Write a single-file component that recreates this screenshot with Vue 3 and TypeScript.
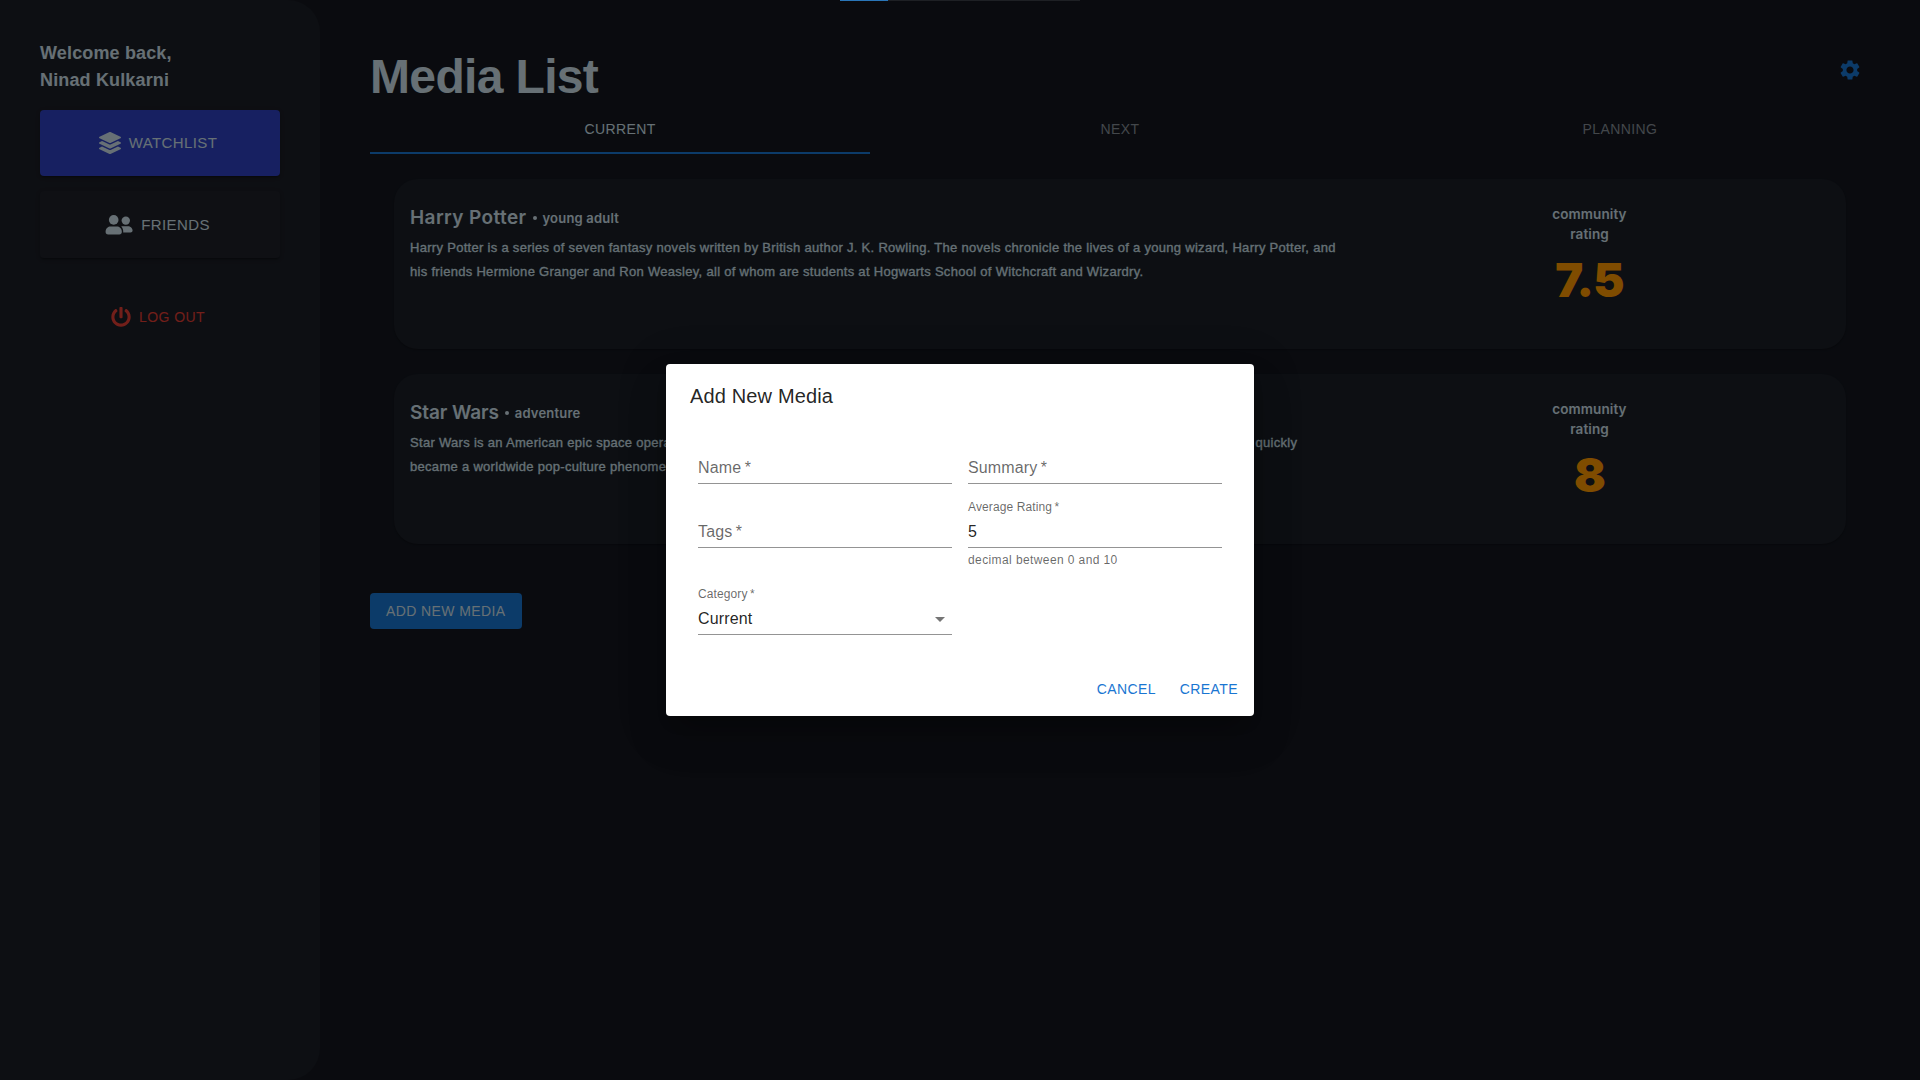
<script setup lang="ts">
interface Media {
  name: string
  tag: string
  summary: string[]
  rating: string
}

const tabs: string[] = ['Current', 'Next', 'Planning']

const mediaList: Media[] = [
  {
    name: 'Harry Potter',
    tag: 'young adult',
    summary: [
      'Harry Potter is a series of seven fantasy novels written by British author J. K. Rowling. The novels chronicle the lives of a young wizard, Harry Potter, and',
      'his friends Hermione Granger and Ron Weasley, all of whom are students at Hogwarts School of Witchcraft and Wizardry.',
    ],
    rating: '7.5',
  },
  {
    name: 'Star Wars',
    tag: 'adventure',
    summary: [
      'Star Wars is an American epic space opera multimedia franchise created by George Lucas, which began with the eponymous 1977 film and quickly',
      'became a worldwide pop-culture phenomenon.',
    ],
    rating: '8',
  },
]
</script>

<template>
  <div class="app">
    <aside class="sidebar">
      <p class="welcome">Welcome back,<br />Ninad Kulkarni</p>
      <button class="nav-btn primary">
        <svg width="22" height="22" viewBox="0 0 512 512" fill="currentColor">
          <path d="M12.41 148.02l232.94 105.67c6.8 3.09 14.49 3.09 21.29 0l232.94-105.67c16.55-7.51 16.55-32.52 0-40.03L266.65 2.31a25.607 25.607 0 0 0-21.29 0L12.41 107.98c-16.55 7.51-16.55 32.53 0 40.04zm487.18 88.28l-58.09-26.33-161.64 73.27c-7.56 3.43-15.59 5.17-23.86 5.17s-16.29-1.74-23.86-5.17L70.51 209.97l-58.1 26.33c-16.55 7.5-16.55 32.5 0 40l232.94 105.59c6.8 3.08 14.49 3.08 21.29 0L499.59 276.3c16.55-7.5 16.55-32.5 0-40zm0 127.8l-57.87-26.23-161.86 73.37c-7.56 3.43-15.59 5.17-23.86 5.17s-16.29-1.74-23.86-5.17L70.29 337.87 12.41 364.1c-16.55 7.5-16.55 32.5 0 40l232.94 105.59c6.8 3.08 14.49 3.08 21.29 0L499.59 404.1c16.55-7.5 16.55-32.5 0-40z" />
        </svg>
        <span>Watchlist</span>
      </button>
      <button class="nav-btn friends">
        <svg width="28" height="20" viewBox="0 0 28 20" fill="currentColor">
          <circle cx="8.7" cy="4.9" r="4.8" />
          <circle cx="20.8" cy="5.6" r="4.2" />
          <path d="M.6 17v-.6c0-3 2.4-5 5-5h6.200c2.600 0 5 2 5 5v.6c0 1.300-.9 2.500-2.500 2.500H3.100C1.500 19.500.6 18.300.6 17z" />
          <path d="M16.200 11.600c.5-.2 1.100-.4 1.800-.4h4.800c2.700 0 4.800 2 4.800 4.400 0 1.200-.9 2-2.100 2h-7.300c.2-2.300-.3-4.400-2-6z" />
        </svg>
        <span>Friends</span>
      </button>
      <button class="logout">
        <svg width="20" height="20" viewBox="0 0 512 512" fill="currentColor">
          <path d="M400 54.1c63 45 104 118.600 104 201.900 0 136.800-110.800 247.700-247.500 248C120 504.300 8.200 393 8 256.400 7.900 173.100 48.900 99.300 111.800 54.200c11.700-8.300 28-4.800 35 7.700L162.600 90c5.900 10.500 3.100 23.800-6.600 31-41.500 30.800-68 79.600-68 134.900-.1 92.300 74.500 168.100 168 168.100 91.600 0 168.600-74.200 168-169.100-.3-51.800-24.700-101.800-68.100-134-9.700-7.200-12.400-20.500-6.500-30.900l15.800-28.100c7-12.400 23.200-16.100 34.800-7.800zM296 264V24c0-13.300-10.700-24-24-24h-32c-13.300 0-24 10.700-24 24v240c0 13.300 10.700 24 24 24h32c13.300 0 24-10.700 24-24z" />
        </svg>
        <span>Log out</span>
      </button>
    </aside>

    <main class="main">
      <header class="header">
        <h1>Media List</h1>
        <svg class="settings" width="24" height="24" viewBox="0 0 24 24" fill="currentColor">
          <path d="M19.140 12.940c.04-.3.06-.61.06-.94 0-.32-.02-.64-.07-.94l2.030-1.580c.18-.14.23-.41.12-.61l-1.920-3.320c-.12-.22-.37-.29-.59-.22l-2.390.96c-.5-.38-1.030-.7-1.620-.94l-.36-2.540c-.04-.24-.24-.41-.48-.41h-3.840c-.24 0-.43.17-.47.41l-.36 2.540c-.59.24-1.130.57-1.620.94l-2.390-.96c-.22-.08-.47 0-.59.22L2.740 8.870c-.12.21-.08.47.12.61l2.030 1.580c-.05.3-.09.63-.09.94s.02.64.07.94l-2.030 1.580c-.18.14-.23.41-.12.61l1.920 3.320c.12.22.37.29.59.22l2.390-.96c.5.38 1.030.7 1.620.94l.36 2.540c.05.24.24.41.48.41h3.840c.24 0 .44-.17.47-.41l.36-2.540c.59-.24 1.130-.56 1.620-.94l2.390.96c.22.08.47 0 .59-.22l1.920-3.320c.12-.22.07-.47-.12-.61l-2.010-1.580zM12 15.600c-1.980 0-3.600-1.620-3.600-3.600s1.620-3.600 3.600-3.600 3.600 1.620 3.600 3.600-1.620 3.600-3.600 3.600z" />
        </svg>
      </header>

      <nav class="tabs">
        <div v-for="(tab, i) in tabs" :key="tab" class="tab" :class="{ active: i === 0 }">{{ tab }}</div>
      </nav>

      <section class="cards">
        <article v-for="media in mediaList" :key="media.name" class="card">
          <div class="info">
            <div class="title-row">
              <span class="name">{{ media.name }}</span>
              <span class="dot"></span>
              <span class="tag">{{ media.tag }}</span>
            </div>
            <p v-for="line in media.summary" :key="line" class="summary">{{ line }}</p>
          </div>
          <div class="rating">
            <div class="rating-label">community<br />rating</div>
            <div class="score">{{ media.rating }}</div>
          </div>
        </article>
      </section>

      <button class="add">Add new media</button>
    </main>

    <div class="backdrop">
      <div class="dialog">
        <h2>Add New Media</h2>
        <div class="form">
          <div class="field"><div class="control empty">Name&thinsp;*</div></div>
          <div class="field"><div class="control empty">Summary&thinsp;*</div></div>
          <div class="field"><div class="control empty">Tags&thinsp;*</div></div>
          <div class="field">
            <label>Average Rating&thinsp;*</label>
            <div class="control">5</div>
            <div class="helper">decimal between 0 and 10</div>
          </div>
          <div class="field">
            <label>Category&thinsp;*</label>
            <div class="control">
              Current
              <svg width="24" height="24" viewBox="0 0 24 24"><path d="M7 10l5 5 5-5z" fill="#757575" /></svg>
            </div>
          </div>
        </div>
        <div class="actions">
          <button>Cancel</button>
          <button>Create</button>
        </div>
      </div>
    </div>

    <div class="progress"><div class="progress-value"></div></div>
  </div>
</template>

<style>
body {
  margin: 0;
  background: #14171f;
}
</style>

<style scoped>
* {
  box-sizing: border-box;
}

.app {
  position: relative;
  display: flex;
  width: 1920px;
  height: 1080px;
  overflow: hidden;
  background: #14171f;
  color: #cee0ea;
  font-family: "Liberation Sans", Arial, sans-serif;
}

button {
  border: 0;
  margin: 0;
  background: none;
  font-family: inherit;
  text-transform: uppercase;
  white-space: nowrap;
}

.sidebar {
  display: flex;
  flex-direction: column;
  width: 320px;
  height: 1080px;
  padding: 40px 40px;
  border-radius: 0 32px 32px 0;
  background: #1b1e26;
}

.welcome {
  margin: 0 0 16px;
  font-size: 18px;
  font-weight: 700;
  line-height: 27px;
  letter-spacing: 0.15px;
}

.nav-btn {
  display: flex;
  align-items: center;
  justify-content: center;
  gap: 8px;
  height: 66px;
  border-radius: 4px;
  color: inherit;
  font-size: 15px;
  letter-spacing: 0.4px;
  box-shadow: 0 3px 1px -2px rgba(0, 0, 0, 0.2), 0 2px 2px rgba(0, 0, 0, 0.14), 0 1px 5px rgba(0, 0, 0, 0.12);
}

.primary {
  padding-right: 10px;
  background: #2f41c2;
}

.primary span {
  padding-bottom: 1px;
}

.friends {
  height: 67px;
  margin-top: 15px;
  padding-right: 11px;
  background: #1e2129;
}

.logout {
  display: flex;
  align-items: center;
  justify-content: center;
  gap: 8px;
  height: 48px;
  margin-top: 35px;
  padding-right: 10px;
  color: #e53e34;
  font-size: 14px;
  letter-spacing: 0.4px;
}

.main {
  display: flex;
  flex-direction: column;
  align-items: flex-start;
  width: 1600px;
  padding: 48px 50px 0;
}

.header {
  display: flex;
  justify-content: space-between;
  width: 1500px;
  height: 58px;
}

h1 {
  margin: 0;
  font-size: 48px;
  line-height: 58px;
  letter-spacing: -0.65px;
}

.settings {
  margin: 10px 8px 0 0;
  color: #1976d2;
}

.tabs {
  display: flex;
  width: 1500px;
}

.tab {
  display: flex;
  align-items: center;
  justify-content: center;
  width: 500px;
  height: 48px;
  border-bottom: 2px solid transparent;
  color: #868e96;
  font-size: 14px;
  letter-spacing: 0.4px;
  text-transform: uppercase;
}

.active {
  border-color: #1976d2;
  color: #cee0ea;
}

.cards {
  display: flex;
  flex-direction: column;
  gap: 25px;
  width: 1500px;
  padding: 25px 24px 0;
}

.card {
  display: flex;
  height: 170px;
  padding: 22px 16px 0;
  border-radius: 24px;
  background: #1b1e26;
  box-shadow: 0 1px 2px rgba(0, 0, 0, 0.3);
}

.info {
  width: 1078px;
}

.title-row {
  display: flex;
  align-items: center;
  height: 35px;
  padding-bottom: 3px;
  font-family: Inter, Roboto, sans-serif;
  font-weight: 600;
}

.name {
  font-size: 19px;
  letter-spacing: 0.4px;
}

.card:last-child .name {
  letter-spacing: -0.1px;
}

.dot {
  width: 4px;
  height: 4px;
  margin: 1px 6px 0;
  border-radius: 50%;
  background: currentColor;
}

.tag {
  margin-top: 1px;
  font-size: 13px;
  letter-spacing: 0.2px;
}

.summary {
  margin: 0;
  font-size: 13px;
  line-height: 24px;
  letter-spacing: 0.297px;
  white-space: nowrap;
  -webkit-text-stroke: 0.3px currentColor;
}

.rating {
  width: 203px;
  padding-top: 3px;
  font-family: Inter, Roboto, sans-serif;
  font-weight: 600;
  text-align: center;
}

.rating-label {
  font-size: 13.5px;
  line-height: 20px;
  letter-spacing: 0.1px;
}

.score {
  margin-top: 8px;
  color: #ff9800;
  font-size: 47px;
  font-weight: 900;
  line-height: 56px;
  letter-spacing: -0.8px;
}

.add {
  height: 36px;
  margin-top: 49px;
  padding: 0 16px;
  border-radius: 4px;
  background: #1976d2;
  color: #cee0ea;
  font-size: 14px;
  letter-spacing: 0.4px;
}

.backdrop {
  position: absolute;
  inset: 0;
  display: flex;
  align-items: center;
  justify-content: center;
  background: rgba(0, 0, 0, 0.5);
}

.dialog {
  width: 588px;
  height: 352px;
  border-radius: 4px;
  background: #fff;
  color: rgba(0, 0, 0, 0.87);
  box-shadow: 0 11px 15px -7px rgba(0, 0, 0, 0.2), 0 24px 38px 3px rgba(0, 0, 0, 0.14), 0 9px 46px 8px rgba(0, 0, 0, 0.12);
}

h2 {
  margin: 0;
  padding: 16px 24px;
  font-size: 20px;
  font-weight: 400;
  line-height: 32px;
  letter-spacing: 0.15px;
}

.form {
  display: grid;
  grid-template-columns: 254px 254px;
  gap: 16px;
  height: 235px;
  padding: 8px 32px 0;
  align-content: start;
}

.field {
  display: flex;
  flex-direction: column;
  min-height: 48px;
  color: rgba(0, 0, 0, 0.6);
}

label {
  height: 16px;
  font-size: 12px;
  line-height: 14px;
  letter-spacing: 0.11px;
}

.control {
  display: flex;
  justify-content: space-between;
  height: 32px;
  padding-top: 4px;
  border-bottom: 1px solid rgba(0, 0, 0, 0.42);
  color: rgba(0, 0, 0, 0.87);
  font-size: 16px;
  line-height: 23px;
  letter-spacing: 0.15px;
}

.empty {
  margin-top: 16px;
  color: rgba(0, 0, 0, 0.6);
}

.helper {
  height: 20px;
  margin-top: 3px;
  font-size: 12px;
  line-height: 18px;
  letter-spacing: 0.4px;
}

.actions {
  display: flex;
  justify-content: flex-end;
  gap: 8px;
  padding: 8px;
}

.actions button {
  height: 36px;
  padding: 0 8px;
  color: #1976d2;
  font-size: 14px;
  letter-spacing: 0.4px;
}

.progress {
  position: absolute;
  top: 0;
  left: 840px;
  width: 240px;
  height: 1px;
  background: #1e2024;
}

.progress-value {
  width: 48px;
  height: 1px;
  background: #2a76b8;
}
</style>
